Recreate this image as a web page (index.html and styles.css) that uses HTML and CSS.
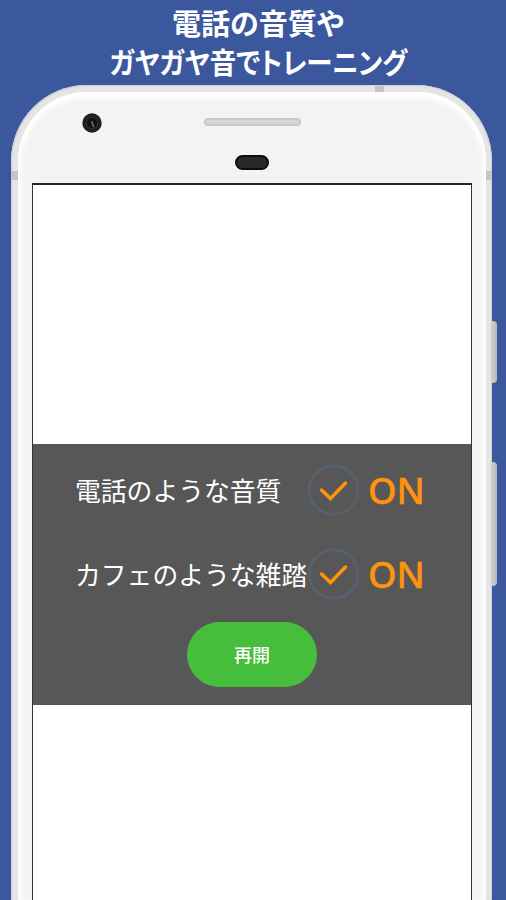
FILE: index.html
```
<!DOCTYPE html>
<html lang="ja">
<head>
    <meta charset="UTF-8">
    <meta name="viewport" content="width=device-width, initial-scale=1.0">
    <title>電話の音質やガヤガヤ音でトレーニング</title>
    <link rel="stylesheet" href="styles.css">
</head>
<body>
    <h1 class="headline">
        <span class="line">電話の音質や</span>
        <span class="line line-narrow">ガヤガヤ音でトレーニング</span>
    </h1>

    <div class="phone">
        <span class="antenna antenna-top"></span>
        <span class="antenna antenna-left"></span>
        <span class="antenna antenna-right"></span>
        <span class="side-button power"></span>
        <span class="side-button volume"></span>

        <div class="face">
            <div class="bezel">
                <svg class="camera" width="20" height="20" viewBox="0 0 20 20">
                    <circle cx="10" cy="10" r="9.7" fill="#1c1c1c"/>
                    <circle cx="10" cy="10" r="7" fill="#292929"/>
                    <circle cx="10" cy="10" r="5" fill="#111"/>
                    <path d="M10 9l1.5 4.5" stroke="#65604c" stroke-width="2" stroke-linecap="round"/>
                </svg>
                <div class="sensors">
                    <span class="speaker"></span>
                    <span class="sensor"></span>
                </div>
            </div>

            <div class="screen">
                <div class="panel">
                    <div class="setting">
                        <span class="label">電話のような音質</span>
                        <svg class="check" width="52" height="52" viewBox="0 0 52 52">
                            <circle cx="25.5" cy="26" r="24.3"/>
                            <path d="M13.5 26l9 8.5L37.500 19"/>
                        </svg>
                        <span class="state">ON</span>
                    </div>
                    <div class="setting">
                        <span class="label">カフェのような雑踏</span>
                        <svg class="check" width="52" height="52" viewBox="0 0 52 52">
                            <circle cx="25.5" cy="26" r="24.3"/>
                            <path d="M13.5 26l9 8.5L37.500 19"/>
                        </svg>
                        <span class="state">ON</span>
                    </div>
                    <button class="resume" type="button">再開</button>
                </div>
            </div>
        </div>
    </div>
</body>
</html>
```

FILE: styles.css
```
* {
    box-sizing: border-box;
}
body {
    margin: 0;
    height: 900px;
    overflow: hidden;
    background-color: #3b579d;
    font-family: "Noto Sans CJK JP", sans-serif;
}
.headline {
    display: flex;
    flex-direction: column;
    align-items: center;
    height: 85px;
    margin: 0;
    padding-top: 3px;
    padding-left: 10px;
    color: #fff;
    font-size: 29px;
    font-weight: 700;
    line-height: 39px;
}
.line {
    white-space: nowrap;
    font-feature-settings: "palt";
}
.line-narrow {
    transform: scaleX(0.91);
}

/* phone body */
.phone {
    position: relative;
    width: 481px;
    height: 815px;
    margin-left: 11px;
    padding: 7px 6px 0 7px;
    border-radius: 76px 76px 0 0;
    background-color: #e4e5e4;
    box-shadow: inset 1px 1px 1px #cfd0d2, inset -1px 0 1px #cfd0d2;
}
.face {
    height: 808px;
    padding: 0 14px;
    border-radius: 69px 69px 0 0;
    background-color: #f3f3f3;
    box-shadow: inset 0 3px 5px 3px #fff;
}
.antenna {
    position: absolute;
    background-color: #c5c5c5;
}
.antenna-top {
    top: 1px;
    left: 364px;
    width: 9px;
    height: 6px;
}
.antenna-left {
    top: 86px;
    left: 0;
    width: 7px;
    height: 9px;
}
.antenna-right {
    top: 86px;
    right: 0;
    width: 6px;
    height: 9px;
}
.side-button {
    position: absolute;
    left: 480px;
    width: 6px;
    border-radius: 0 4px 4px 0;
    background: linear-gradient(to right, #d2d2d2, #b5b6ba);
}
.power {
    top: 236px;
    height: 62px;
}
.volume {
    top: 377px;
    height: 124px;
}

/* camera, speaker and sensor above the screen */
.bezel {
    display: grid;
    grid-template-columns: 70px 1fr 70px;
    height: 91px;
    padding-top: 20px;
}
.camera {
    justify-self: end;
    margin-top: 1px;
}
.sensors {
    display: flex;
    flex-direction: column;
    align-items: center;
    padding-top: 6px;
}
.speaker {
    width: 97px;
    height: 8px;
    border: 2px solid #c8c8c8;
    border-radius: 4px;
    background-color: #d7d7d7;
}
.sensor {
    width: 34px;
    height: 15px;
    margin-top: 29px;
    border: 2px solid #0c0c0c;
    border-radius: 8px;
    background-color: #282828;
}

/* app screen */
.screen {
    height: 717px;
    padding-top: 259px;
    border: 1px solid #333;
    border-top: 2px solid #222;
    border-bottom: 0;
    background-color: #fff;
}
.panel {
    display: flex;
    flex-direction: column;
    align-items: center;
    height: 261px;
    padding-top: 20px;
    background-color: #575757;
}
.setting {
    display: flex;
    align-items: center;
    width: 100%;
    height: 52px;
    margin-bottom: 32px;
    padding-left: 42px;
}
.label {
    width: 233px;
    color: #fff;
    font-size: 25.8px;
    line-height: 52px;
    white-space: nowrap;
}
.check {
    flex: none;
    fill: none;
}
.check circle {
    stroke: #56616d;
    stroke-width: 3;
}
.check path {
    stroke: #ff930f;
    stroke-width: 3.5;
    stroke-linecap: round;
}
.state {
    margin-left: 8px;
    color: #ff930f;
    font-family: "Noto Sans", sans-serif;
    font-size: 36.5px;
    font-weight: 500;
    line-height: 52px;
    -webkit-text-stroke: 0.4px #ff930f;
}
.resume {
    width: 130px;
    height: 65px;
    margin-top: -10px;
    padding: 0 0 2px;
    border: none;
    border-radius: 33px;
    background-color: #46bd3b;
    color: #fff;
    font-family: "Noto Sans CJK JP", sans-serif;
    font-size: 18px;
    font-weight: 500;
}
```
